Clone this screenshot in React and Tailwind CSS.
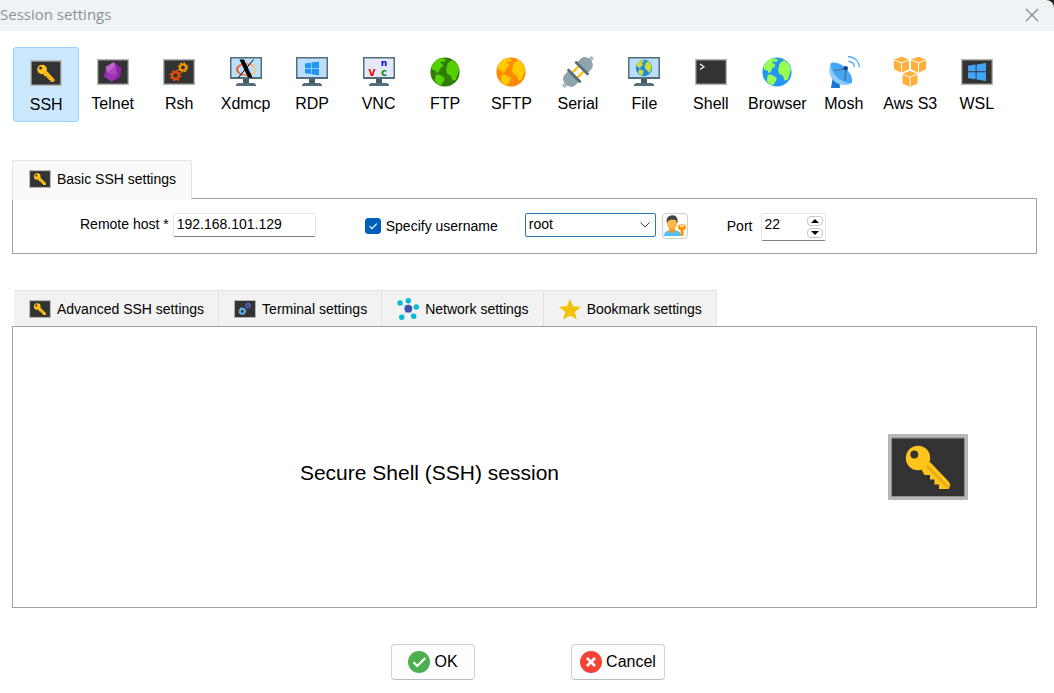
import { useState } from "react";

function Frame() {
  return (
    <>
      <rect x="0" y="3" width="32" height="26" fill="#b4b4b4" />
      <rect x="1" y="4" width="30" height="24" fill="#8a8a8a" />
      <rect x="1.6" y="4.6" width="28.8" height="22.8" fill="#333333" />
    </>
  );
}

function Monitor({ screen = "#bbdefb" }) {
  return (
    <>
      <rect x="0" y="1" width="32" height="22" fill="#546e7a" />
      <rect x="1.5" y="2.5" width="29" height="18.5" fill={screen} />
      <rect x="13" y="23" width="6" height="4" fill="#455a64" />
      <path d="M8 27h16l2 1.5V30H6v-1.5z" fill="#546e7a" />
    </>
  );
}

function Gear({ cx, cy, r, color }) {
  const tooth = (Math.PI * 2 * r * 0.86) / 16;
  return (
    <g fill="none" stroke={color}>
      <circle cx={cx} cy={cy} r={r * 0.58} strokeWidth={r * 0.4} />
      <circle cx={cx} cy={cy} r={r * 0.86} strokeWidth={r * 0.28} strokeDasharray={`${tooth} ${tooth}`} />
    </g>
  );
}

function Globe({ sea, land }) {
  return (
    <>
      <circle cx="16" cy="16" r="14.6" fill={sea} />
      <path
        fill={land}
        d="M3.200 9.200C5 6 7.600 3.800 11 2.300l3.600.1 2.400 1.600-1.800 2.200-2.400-1-1.800 1.600 2.600 1.300.4 2.700-2.800 1.500-1.500 3.600-2.400 1-.6-2.400-3-.6-1.400-2.600zM6.800 18.600l4 .2 4.800 3-.6 3.300-3.200 4.300C9.300 28.600 7.400 27 5.800 25zM18.600 7.600l4.300-3.600c3.500 1.900 6 5.200 7 9.200l-1.200 5-2.200 5.800-3 .6-1.800-5-3.400-1.700-1.200-4z"
      />
    </>
  );
}

function WindowsMark({ x, y, size, color }) {
  return (
    <svg x={x} y={y} width={size} height={size} viewBox="0 0 20 20">
      <path fill={color} d="M0 3l8.500-1.200v7.500H0zM9.500 1.600L20 0v9.300H9.500zM0 10.400h8.500v7.600L0 16.900zM9.500 10.400H20V20L9.500 18.300z" />
    </svg>
  );
}

function Key({ className }) {
  return (
    <svg viewBox="0 0 80 66" className={className} aria-hidden="true">
      <rect width="80" height="66" fill="#b8b8b8" />
      <rect x="3" y="3.500" width="74" height="59.500" fill="#909090" />
      <rect x="4" y="4.500" width="72" height="57.500" fill="#333333" />
      <circle cx="30" cy="24" r="12.200" fill="#ffc51c" />
      <path fill="#ffc51c" d="M42 28l19 20q2 2.500.6 5l-1 2H51v-4.500h-4.500v-5H42v-4.500h-5.500L33.700 36z" />
      <path d="M39 32l21 21" stroke="#e6ac10" strokeWidth="2.600" />
      <circle cx="26.300" cy="20.500" r="3.900" fill="#333333" />
    </svg>
  );
}

function Icon({ children }) {
  return (
    <svg viewBox="0 0 32 32" className="size-8 shrink-0" aria-hidden="true">
      {children}
    </svg>
  );
}

function Cube({ x, y }) {
  return (
    <g transform={`translate(${x} ${y})`}>
      <path d="M7.500 0L15 2.800v9.700L7.500 16 0 12.500V2.800z" fill="#ffb03b" />
      <path d="M0 3.200l7.500 3 7.500-3M7.500 6.200V16" fill="none" stroke="#fff" strokeWidth="1" />
    </g>
  );
}

function PlugHalf() {
  return (
    <g>
      <rect x="16" y="-2" width="5" height="4" fill="#b0bec5" />
      <path d="M6-7.500h5c4 0 6.500 3.500 6.500 7.500S15 7.500 11 7.500H6z" fill="#90a4ae" />
      <rect x="4" y="-9.200" width="2.800" height="18.400" rx=".6" fill="#546e7a" />
    </g>
  );
}

const sessions = [
  { name: "SSH", icon: <span className="flex size-8 items-center"><Key className="h-[26px] w-8" /></span> },
  {
    name: "Telnet",
    icon: (
      <Icon>
        <Frame />
        <path d="M17 6l7.500 6.300L23 21.300l-8.300 4.500L7 20.300l1.700-9.500z" fill="#8e24aa" />
        <path d="M17 6l1.500 4.200-8.200 7L8.700 10.800z" fill="#ba68c8" />
        <path d="M18.500 10.200l1.800 9-10-2z" fill="#ab47bc" />
        <path d="M10.300 17.200l10 2-5.600 6.600L7 20.300z" fill="#9c34b5" />
      </Icon>
    ),
  },
  {
    name: "Rsh",
    icon: (
      <Icon>
        <Frame />
        <Gear cx={12.5} cy={19.500} r={5.800} color="#e65100" />
        <Gear cx={20} cy={11.500} r={5.200} color="#ff9800" />
      </Icon>
    ),
  },
  {
    name: "Xdmcp",
    icon: (
      <Icon>
        <Monitor />
        <defs>
          <linearGradient id="ring">
            <stop offset="0" stopColor="#f4511e" />
            <stop offset="1" stopColor="#ffcc80" />
          </linearGradient>
        </defs>
        <ellipse cx="16.300" cy="13.500" rx="9.300" ry="5.600" fill="none" stroke="url(#ring)" strokeWidth="1.900" />
        <path d="M23.500 3.500L8.500 21.500" stroke="#000" strokeWidth="1" />
        <path d="M9.500 3.500h4.500l8.500 18h-4.500z" fill="#000" />
      </Icon>
    ),
  },
  { name: "RDP", icon: <Icon><Monitor /><WindowsMark x={9} y={5.500} size={14} color="#2196f3" /></Icon> },
  {
    name: "VNC",
    icon: (
      <Icon>
        <Monitor screen="#e3e8fb" />
        <g fontFamily="DejaVu Sans, sans-serif" fontWeight="700" textAnchor="middle">
          <text x="9" y="20" fontSize="9" fill="#f00000">V</text>
          <text x="21" y="9.800" fontSize="9" fill="#0000e0">n</text>
          <text x="21" y="20.200" fontSize="10" fill="#008c1e">c</text>
        </g>
      </Icon>
    ),
  },
  { name: "FTP", icon: <Icon><Globe sea="#2e7d0a" land="#55d000" /></Icon> },
  { name: "SFTP", icon: <Icon><Globe sea="#ff8a00" land="#ffca00" /></Icon> },
  {
    name: "Serial",
    icon: (
      <Icon>
        <g transform="translate(16 16) rotate(-45)">
          <path d="M-4-3.500h8M-4 3.500h8" stroke="#ffc107" strokeWidth="2.400" />
          <PlugHalf />
          <g transform="rotate(180)"><PlugHalf /></g>
        </g>
      </Icon>
    ),
  },
  {
    name: "File",
    icon: (
      <Icon>
        <Monitor />
        <svg x="7" y="3" width="18" height="18" viewBox="0 0 32 32"><Globe sea="#1e88e5" land="#cddc39" /></svg>
      </Icon>
    ),
  },
  { name: "Shell", icon: <Icon><Frame /><path d="M5 8l4 2.800L5 13.500" fill="none" stroke="#fff" strokeWidth="1.200" /></Icon> },
  { name: "Browser", icon: <Icon><Globe sea="#2196f3" land="#98ff52" /></Icon> },
  {
    name: "Mosh",
    icon: (
      <Icon>
        <path d="M4.500 23L3 32h9l-.5-6z" fill="#1976d2" />
        <path d="M3 7C-.5 14 1.500 21 6 25s12 6 17.500 2z" fill="#90caf9" />
        <path d="M3 7c5-1.500 11 1 15.500 6S25.500 24 23.500 27c-4.500 1-11-2-15-6.500S2 11 3 7z" fill="#42a5f5" />
        <path d="M6 14.500l11.700-2L17 24.500" fill="none" stroke="#546e7a" strokeWidth="1.200" />
        <circle cx="17.700" cy="12.300" r="2.300" fill="#0d47a1" />
        <path d="M20 .7C26 .7 31.300 5 31.300 11.300M20.300 5.300c3.500.2 6 2.400 6 5.600" fill="none" stroke="#42a5f5" strokeWidth="1.200" />
      </Icon>
    ),
  },
  { name: "Aws S3", icon: <Icon><Cube x={0} y={0.700} /><Cube x={17} y={0.700} /><Cube x={8.500} y={15} /></Icon> },
  { name: "WSL", icon: <Icon><Frame /><WindowsMark x={7} y={7} size={18} color="#42a5f5" /></Icon> },
];

const tabs = [
  { name: "Advanced SSH settings", icon: <Key className="h-[18px] w-[22px]" /> },
  {
    name: "Terminal settings",
    icon: (
      <svg viewBox="0 0 22 18" className="h-[18px] w-[22px]" aria-hidden="true">
        <rect width="22" height="18" fill="#b4b4b4" />
        <rect x="1" y="1" width="20" height="16" fill="#333333" />
        <Gear cx={8.300} cy={11.200} r={4} color="#64b5f6" />
        <Gear cx={14} cy={5.600} r={3.200} color="#5c6bd0" />
      </svg>
    ),
  },
  {
    name: "Network settings",
    icon: (
      <svg viewBox="0 0 22 22" className="size-[22px]" aria-hidden="true">
        <path d="M11.300 10.700L3 5M11.300 10.700v-8M11.300 10.700l8-1.700M11.300 10.700l5.400 7.600M11.300 10.700l-6.600 8.600" stroke="#cfd8dc" strokeWidth="1.200" />
        <g fill="#00bcd4">
          <circle cx="3" cy="5" r="2.700" />
          <circle cx="11.300" cy="2.700" r="2.700" />
          <circle cx="19.300" cy="9" r="2.700" />
          <circle cx="16.700" cy="18.300" r="2.700" />
          <circle cx="4.700" cy="19.300" r="2.700" />
        </g>
        <circle cx="11.300" cy="10.700" r="3.900" fill="#3f51b5" />
      </svg>
    ),
  },
  {
    name: "Bookmark settings",
    icon: (
      <svg viewBox="0 0 22 22" className="size-[22px]" aria-hidden="true">
        <path d="M11 1l3 7.200 8 .6-6.200 5.200 2 7.500L11 17.400 4.200 21.500l2-7.500L0 8.800l8-.6z" fill="#f2c200" />
      </svg>
    ),
  },
];

export default function App() {
  const [session, setSession] = useState("SSH");
  const [port, setPort] = useState(22);

  return (
    <div className="flex min-h-screen flex-col bg-white font-['Liberation_Sans',Arial,sans-serif] text-sm text-black">
      <div className="bg-[#202020]">
        <header className="flex h-[31px] items-center justify-between rounded-tr-lg bg-[#eff3f6] pr-[15px] pb-0.5">
          <h1 className="font-['Open_Sans','Noto_Sans',sans-serif] text-[15px] text-[#8e9092]">Session settings</h1>
          <button type="button" aria-label="Close">
            <svg viewBox="0 0 14 14" className="size-[14px]" aria-hidden="true">
              <path d="M1 1l12 12M13 1L1 13" stroke="#85888b" strokeWidth="1.200" />
            </svg>
          </button>
        </header>
      </div>

      <nav aria-label="Session type" className="mt-4 grid grid-cols-15 pr-11 pl-[13px]">
        {sessions.map((s) => (
          <button
            key={s.name}
            type="button"
            aria-pressed={session === s.name}
            onClick={() => setSession(s.name)}
            className={
              "flex h-[75px] flex-col items-center gap-1 pt-[9px] text-base leading-6 whitespace-nowrap " +
              (session === s.name ? "rounded-[3px] border border-[#99d1ff] bg-[#cce8ff]" : "")
            }
          >
            {s.icon}
            {s.name}
          </button>
        ))}
      </nav>

      <section className="mt-[38px] mr-[17px] ml-3">
        <h2 className="relative -mb-0.5 flex h-10 w-fit items-center gap-1.5 rounded-t-xs border border-b-0 border-[#e3e3e3] bg-[#f9f9f9] pr-[15px] pb-1 pl-4">
          <Key className="h-[18px] w-[22px]" />
          Basic SSH settings
        </h2>
        <form className="flex h-14 items-start border border-[#a0a0a0] pt-3.5 pl-[67px] leading-5">
          <label htmlFor="host" className="mt-px whitespace-nowrap">Remote host *</label>
          <input
            id="host"
            defaultValue="192.168.101.129"
            className="ml-1 h-6 w-[143px] rounded-xs border border-[#e5e5e5] border-b-[#808080] px-[3px] pb-0.5 outline-none"
          />
          <label className="mt-[3px] ml-[49px] flex items-center gap-[5px] whitespace-nowrap">
            <span className="grid size-4">
              <input type="checkbox" defaultChecked className="peer col-start-1 row-start-1 size-4 appearance-none rounded-[3px] border border-[#808080] checked:border-[#005fb8] checked:bg-[#005fb8]" />
              <svg viewBox="0 0 16 16" className="pointer-events-none invisible col-start-1 row-start-1 size-4 peer-checked:visible" aria-hidden="true">
                <path d="M4.500 8.200L7 10.700l4.800-5" fill="none" stroke="#fff" strokeWidth="1.100" />
              </svg>
            </span>
            Specify username
          </label>
          <div className="ml-[27px] grid w-[131px] items-center">
            <select
              aria-label="Username"
              className="col-start-1 row-start-1 h-6 appearance-none rounded-xs border border-[#2878b8] bg-white pr-6 pb-0.5 pl-[3px] outline-none"
            >
              <option>root</option>
            </select>
            <svg viewBox="0 0 10 6" className="pointer-events-none col-start-1 row-start-1 mr-1.5 h-1.5 w-2.5 justify-self-end" aria-hidden="true">
              <path d="M.5.5L5 5 9.500.5" fill="none" stroke="#444" strokeWidth="1" />
            </svg>
          </div>
          <button type="button" aria-label="Manage credentials" className="ml-1.5 flex size-[26px] items-center justify-center rounded border border-[#d0d0d0] bg-[#fdfdfd]">
            <svg viewBox="0 0 24 24" className="size-6" aria-hidden="true">
              <path d="M1 22c0-4 3-6 8.500-6s8.500 2 8.500 6z" fill="#4fc3f7" />
              <path d="M6 13h6v4l-3 2.500L6 17z" fill="#ff9800" />
              <ellipse cx="9" cy="9.500" rx="5" ry="6" fill="#ffb74d" />
              <path d="M3.800 9.500C3 4.500 5 1.500 9.500 1.300c4 0 5.700 3 4.800 8.200l-1-1.500-.5-2L8 5.500 5 7z" fill="#424242" />
              <path d="M15 13c0-2 1.500-2.700 4-2.700s4 .7 4 2.700c0 2-1 3-2.500 3.300V22h-3v-5.700C16 16 15 15 15 13z" fill="#ff9800" />
              <rect x="17" y="11.300" width="4" height="1.300" fill="#fff" />
            </svg>
          </button>
          <label htmlFor="port" className="mt-[3px] ml-[39px]">Port</label>
          <div className="ml-[9px] flex h-7 w-[65px] justify-between rounded-xs border border-[#e5e5e5] border-b-[#808080] pr-0.5">
            <input
              id="port"
              inputMode="numeric"
              value={port}
              onChange={(e) => setPort(Number(e.target.value) || 0)}
              className="h-[22px] w-10 pb-0.5 pl-0.5 outline-none"
            />
            <div className="flex flex-col gap-0.5 pt-0.5">
              <button type="button" aria-label="Increase port" onClick={() => setPort(port + 1)} className="flex h-2.5 w-4 items-center justify-center rounded border border-[#c8c8c8]">
                <svg viewBox="0 0 8 4" className="h-1 w-2" aria-hidden="true"><path d="M4 0l4 4H0z" /></svg>
              </button>
              <button type="button" aria-label="Decrease port" onClick={() => setPort(port - 1)} className="flex h-2.5 w-4 items-center justify-center rounded border border-[#c8c8c8]">
                <svg viewBox="0 0 8 4" className="h-1 w-2" aria-hidden="true"><path d="M4 4l4-4H0z" /></svg>
              </button>
            </div>
          </div>
        </form>
      </section>

      <section className="mt-9 mr-[17px] ml-3 flex flex-1 flex-col">
        <div className="ml-0.5 flex h-9 w-fit border-t border-r border-[#e3e3e3] bg-[#f2f2f2]">
          {tabs.map((t, i) => (
            <button
              key={t.name}
              type="button"
              className={"flex items-center gap-1.5 pr-3.5 pl-[15px] whitespace-nowrap " + (i > 0 ? "border-l border-[#e0e0e0]" : "")}
            >
              {t.icon}
              {t.name}
            </button>
          ))}
        </div>
        <div className="flex flex-1 items-center border border-[#a0a0a0] pr-[68px]">
          <p className="flex-1 pt-3 pr-[42px] text-center text-[21px]">Secure Shell (SSH) session</p>
          <Key className="h-[66px] w-20" />
        </div>
      </section>

      <footer className="flex justify-center gap-24 pt-9 pb-[13px] pl-0.5 text-base">
        <button type="button" className="flex h-9 w-[84px] items-center justify-center gap-1 rounded border border-[#d0d0d0] border-b-[#bcbcbc] bg-[#fdfdfd]">
          <svg viewBox="0 0 22 22" className="size-[22px]" aria-hidden="true">
            <circle cx="11" cy="11" r="11" fill="#4caf50" />
            <path d="M5.500 11.200L9.300 15l8-8" fill="none" stroke="#fff" strokeWidth="2.200" />
          </svg>
          OK
        </button>
        <button type="button" className="flex h-9 w-[94px] items-center justify-center gap-1 rounded border border-[#d0d0d0] border-b-[#bcbcbc] bg-[#fdfdfd]">
          <svg viewBox="0 0 22 22" className="size-[22px]" aria-hidden="true">
            <circle cx="11" cy="11" r="11" fill="#f44336" />
            <path d="M7 7l8 8M15 7l-8 8" stroke="#fff" strokeWidth="2.600" />
          </svg>
          Cancel
        </button>
      </footer>
    </div>
  );
}
